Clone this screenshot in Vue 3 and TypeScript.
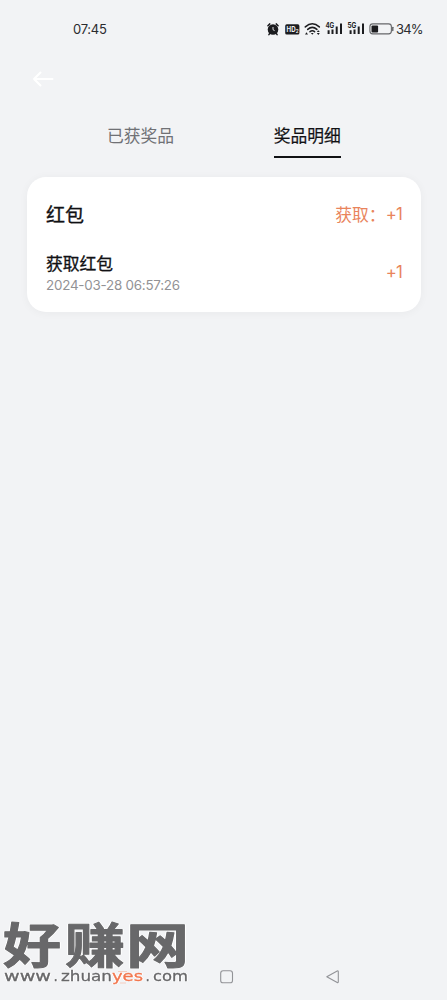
<script setup lang="ts">
interface PrizeRecord {
  title: string
  time: string
  amount: string
}

const tabs = [
  { label: '已获奖品', active: false },
  { label: '奖品明细', active: true },
]

const records: PrizeRecord[] = [
  { title: '获取红包', time: '2024-03-28 06:57:26', amount: '+1' },
]
</script>

<template>
  <div class="screen">
    <header class="status">
      <span class="clock">07:45</span>
      <div class="indicators">
        <svg class="alarm" width="14" height="14" viewBox="0 0 14 14">
          <circle cx="7" cy="7.5" r="5.3" fill="#1c1c1f" />
          <path d="M1.9 3.7 3.8 1.9M12.1 3.7 10.2 1.9M3.6 11.6 2.9 12.6M10.4 11.6 11.1 12.6" stroke="#1c1c1f" stroke-width="1.5" stroke-linecap="round" />
          <path d="M7 5V7.7L8.6 8.6" fill="none" stroke="#f2f3f5" stroke-width="0.9" />
        </svg>
        <svg class="hd" width="15" height="11" viewBox="0 0 15 11">
          <rect x="0.2" y="0.3" width="14.2" height="10.2" rx="1.6" fill="#1c1c1f" />
          <text x="1.6" y="8" font-size="7" font-weight="700" textLength="9" lengthAdjust="spacingAndGlyphs" fill="#f2f3f5">HD</text>
          <text x="10.7" y="8.7" font-size="4.5" font-weight="700" fill="#f2f3f5">2</text>
        </svg>
        <svg class="wifi" width="17" height="14" viewBox="0 0 17 14">
          <g fill="none" stroke="#1c1c1f" stroke-width="1.5" stroke-linecap="round">
            <path d="M1.3 4.9Q8.3-1.4 15.3 4.9" />
            <path d="M3.7 7.4Q8.3 3.4 12.9 7.4" />
            <path d="M6 9.7Q8.3 7.9 10.6 9.7" />
          </g>
          <path d="M6.9 11.1h2.8L8.3 12.8zM1 12.4h3L2.5 10.2zM12.8 9.9h3L14.3 8.3zM12.8 11.1h3l-1.5 1.8z" fill="#1c1c1f" />
        </svg>
        <svg v-for="network in ['4G', '5G']" :key="network" class="signal" width="18" height="14" viewBox="0 0 18 14">
          <text x="0.4" y="6.2" font-size="7" font-weight="700" textLength="8.8" lengthAdjust="spacingAndGlyphs" fill="#1c1c1f">{{ network }}</text>
          <path d="M3.6 8.2v3.9M7.5 7.4v4.7M11.7 4.6v7.5M16 1.6v10.5" stroke="#1c1c1f" stroke-width="2" />
        </svg>
        <svg class="battery" width="25" height="12" viewBox="0 0 25 12">
          <rect x="0.9" y="0.9" width="21.5" height="10" rx="2.8" fill="none" stroke="#66676a" stroke-width="1.1" />
          <rect x="2.5" y="2.4" width="6.6" height="7" rx="1" fill="#1c1c1f" />
          <path d="M23.8 4.3v3.2" stroke="#55565a" stroke-width="1.3" stroke-linecap="round" />
        </svg>
        <span class="charge">34%</span>
      </div>
    </header>

    <nav class="topbar">
      <svg width="22" height="16" viewBox="0 0 22 16">
        <path d="M8.5 1.5 2 8l6.5 6.5M2 8h18.5" fill="none" stroke="#fff" stroke-width="2" stroke-linecap="round" stroke-linejoin="round" />
      </svg>
    </nav>

    <div class="tabs">
      <div v-for="tab in tabs" :key="tab.label" class="tab" :class="{ active: tab.active }">{{ tab.label }}</div>
    </div>

    <main class="card">
      <div class="card-head">
        <h2>红包</h2>
        <div class="total"><span>获取：</span><span class="amount">+1</span></div>
      </div>
      <div v-for="record in records" :key="record.time" class="record">
        <div>
          <div class="title">{{ record.title }}</div>
          <div class="time">{{ record.time }}</div>
        </div>
        <span class="amount">{{ record.amount }}</span>
      </div>
    </main>

    <footer class="bottom">
      <svg width="447" height="110" viewBox="0 -20 447 110">
        <g fill="none" stroke="#929397" stroke-width="1.1" stroke-linejoin="round">
          <path d="M118 61.5h9M120 73h6" stroke="#f3cdbf" />
          <rect x="220.7" y="60.8" width="11.8" height="12" rx="2.4" />
          <path d="M326.8 66.7 337.2 61Q338.3 60.5 338.3 61.7V71.7Q338.3 73 337.2 72.4Z" />
        </g>
        <g class="watermark">
          <g class="brand">
            <text x="3" y="53" textLength="58" lengthAdjust="spacingAndGlyphs">好</text>
            <text x="65" y="53" textLength="60" lengthAdjust="spacingAndGlyphs">赚</text>
            <text x="126" y="53" textLength="63" lengthAdjust="spacingAndGlyphs">网</text>
          </g>
          <g class="site">
            <text x="4" y="71" textLength="47" lengthAdjust="spacingAndGlyphs">www</text>
            <text x="53.5" y="71">.</text>
            <text x="61" y="71" textLength="51" lengthAdjust="spacingAndGlyphs">zhuan</text>
            <text class="accent" x="112" y="71" textLength="31" lengthAdjust="spacingAndGlyphs">yes</text>
            <text x="145.5" y="71">.</text>
            <text x="153" y="71" textLength="35" lengthAdjust="spacingAndGlyphs">com</text>
          </g>
        </g>
      </svg>
    </footer>
  </div>
</template>

<style>
body {
  margin: 0;
  background: #f2f3f5;
}
</style>

<style scoped>
.screen {
  display: flex;
  flex-direction: column;
  width: 447px;
  height: 1000px;
  overflow: hidden;
  background: #f2f3f5;
  color: #111114;
  font-family: Inter, "Noto Sans CJK SC", sans-serif;
}

.status {
  display: flex;
  justify-content: space-between;
  align-items: center;
  box-sizing: border-box;
  height: 58px;
  padding: 0 25px 0 73px;
  font-size: 13px;
  color: #2b2b2e;
}

.clock {
  letter-spacing: -0.25px;
}

.indicators {
  display: flex;
  align-items: center;
}

.hd {
  margin-left: 5px;
}

.wifi {
  margin-left: 4px;
}

.signal {
  margin-left: 4px;
}

.battery {
  margin-left: 4px;
}

.charge {
  margin-left: 2px;
  width: 26px;
  white-space: nowrap;
  letter-spacing: -0.9px;
}

.topbar {
  display: flex;
  align-items: center;
  height: 42px;
  padding-left: 32px;
}

.tabs {
  display: flex;
  gap: 99.5px;
  padding: 24px 0 0 107px;
}

.tab {
  height: 32px;
  border-bottom: 2px solid transparent;
  font-size: 16.8px;
  line-height: 25px;
  color: #707175;
}

.tab.active {
  color: #111114;
  border-color: #111114;
  -webkit-text-stroke: 0.2px #111114;
}

.card {
  box-sizing: border-box;
  width: 394px;
  height: 135px;
  margin: 19px 0 0 27px;
  padding: 23px 19px 0;
  border-radius: 19px;
  background: #fff;
  box-shadow: 0 1px 10px rgba(0, 0, 0, 0.045);
}

.card-head,
.record {
  display: flex;
  align-items: center;
  justify-content: space-between;
}

.card-head {
  height: 30px;
}

h2 {
  margin: 2px 0 0;
  font-size: 19px;
  font-weight: 400;
  line-height: 30px;
  -webkit-text-stroke: 0.35px #111114;
}

.total,
.amount {
  color: #e9845c;
  font-size: 16.8px;
}

.total {
  display: flex;
  align-items: center;
  height: 26px;
  margin-top: -2px;
}

.amount {
  letter-spacing: -0.8px;
}

.record {
  margin-top: 22px;
}

.record .amount {
  margin-top: -2px;
}

.title {
  font-size: 16.8px;
  line-height: 25px;
  -webkit-text-stroke: 0.3px #111114;
}

.time {
  font-size: 13.4px;
  line-height: 17px;
  letter-spacing: -0.23px;
  color: #929295;
}

.bottom {
  height: 110px;
  margin-top: auto;
}

.watermark {
  fill: #68686a;
  stroke-linejoin: round;
  filter: drop-shadow(1px 0 0 #fff) drop-shadow(-1px 0 0 #fff);
}

.brand {
  font: 700 47.5px "Noto Sans CJK SC", sans-serif;
  stroke: #68686a;
  stroke-width: 1px;
}

.site {
  font: 400 13.5px "DejaVu Sans", sans-serif;
  stroke: #68686a;
  stroke-width: 0.3px;
}

.accent {
  fill: #f2774f;
  stroke: #f2774f;
}
</style>
